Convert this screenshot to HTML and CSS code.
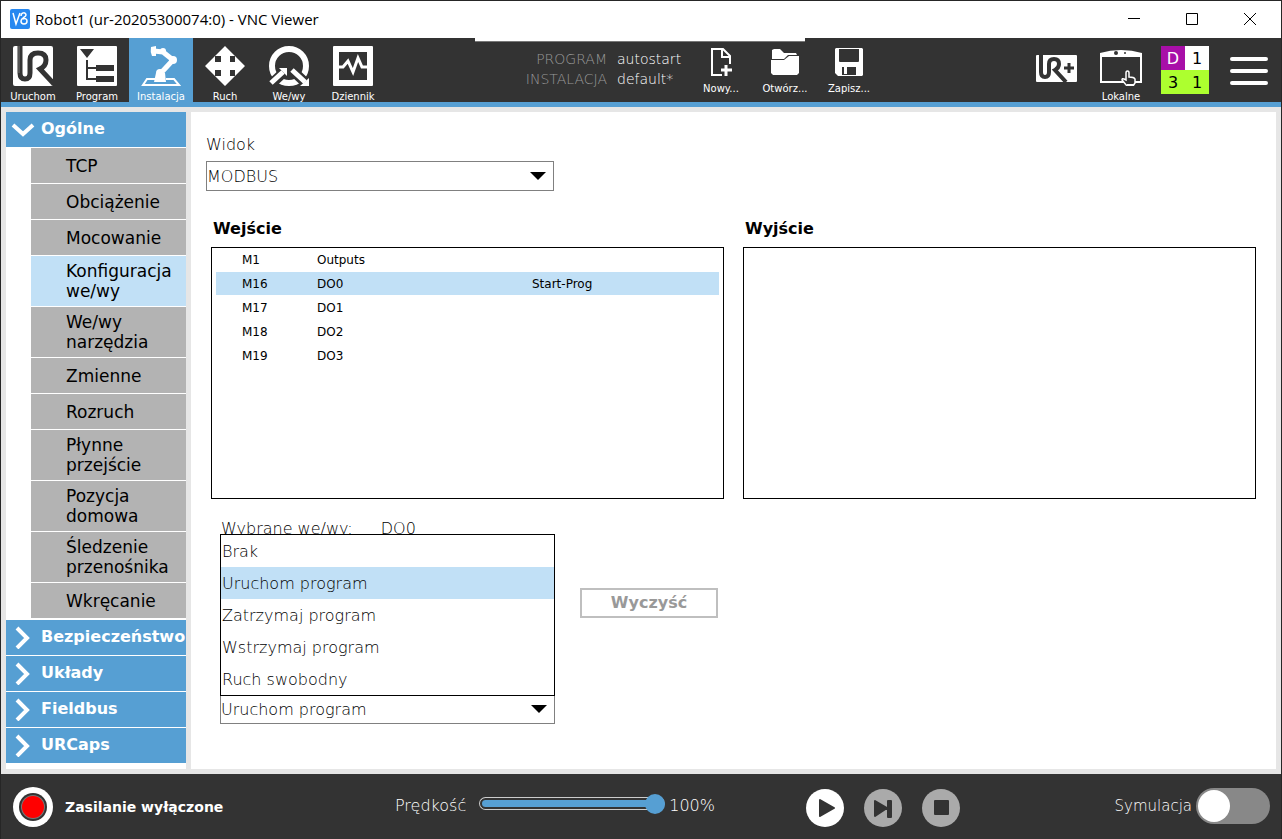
FILE: index.html
```
<!DOCTYPE html>
<html lang="pl">
  <head>
    <meta charset="UTF-8" />
    <meta name="viewport" content="width=device-width, initial-scale=1.0">
    <title>Robot1 (ur-20205300074:0) - VNC Viewer</title>
    <link rel="stylesheet" href="styles.css">
  </head>
  <body>
    <div class="window">
      <!-- Title bar -->
      <header class="titlebar">
        <svg class="app-icon" width="20" height="20" viewBox="0 0 20 20">
          <rect width="20" height="20" rx="2" fill="#2788f0"/>
          <path d="M3 4l3 11 4-11" fill="none" stroke="#fff" stroke-width="1.5"/>
          <path d="M11 7c0-4 5-4 5-1 0 2-5 3-5 6 0 4 6 4 6 0 0-2-2-3-4-2" fill="none" stroke="#fff" stroke-width="1.5"/>
        </svg>
        <span class="window-title">Robot1 (ur-20205300074:0) - VNC Viewer</span>
        <div class="window-buttons">
          <button class="window-button" aria-label="Minimize">
            <svg width="14" height="14" viewBox="0 0 14 14"><path d="M1 6.500h12" stroke="#000"/></svg>
          </button>
          <button class="window-button" aria-label="Maximize">
            <svg width="14" height="14" viewBox="0 0 14 14"><path d="M1.500 1.500h11v11h-11z" fill="none" stroke="#000"/></svg>
          </button>
          <button class="window-button" aria-label="Close">
            <svg width="14" height="14" viewBox="0 0 14 14"><path d="M1 1l12 12M13 1L1 13" stroke="#000"/></svg>
          </button>
        </div>
      </header>
      <div class="vnc-handle"></div>

      <!-- Toolbar -->
      <div class="toolbar">
        <nav class="tabs">
          <button class="tab">
            <svg width="40" height="40" viewBox="0 0 40 40">
              <rect width="40" height="40" rx="2" fill="#fff"/>
              <path d="M7 0V27Q7 33 12 33T17 27V14Q17 7 25 7T33 14Q33 20 27 23L41 38" fill="none" stroke="#333" stroke-width="5"/>
              <path d="M6 0v27" stroke="#777"/>
            </svg>
            Uruchom
          </button>
          <button class="tab">
            <svg width="40" height="40" viewBox="0 0 40 40">
              <rect width="40" height="40" rx="1" fill="#fff"/>
              <path d="M3 3h14l-7 9zM19 19h18v6H19zM19 30h18v6H19z" fill="#333"/>
              <path d="M10 14v19h9M10 22h9" fill="none" stroke="#333" stroke-width="2"/>
            </svg>
            Program
          </button>
          <button class="tab tab-active">
            <svg width="40" height="40" viewBox="0 0 40 40">
              <path d="M14 33H6l-4 6h36l-5-6h-8" fill="none" stroke="#fff" stroke-width="2"/>
              <path d="M13 5l9 1 10 8-13 14" fill="none" stroke="#fff" stroke-width="5" stroke-linejoin="round"/>
              <path d="M10 1l5-1v10h-4q-2-4-1-9z" fill="#fff"/>
              <circle cx="22" cy="5" r="3" fill="#fff"/>
              <circle cx="32" cy="14" r="4" fill="#fff"/>
              <circle cx="19" cy="27" r="4" fill="#fff"/>
              <path d="M15 27h9l1 9H13z" fill="#fff"/>
            </svg>
            Instalacja
          </button>
          <button class="tab">
            <svg width="40" height="40" viewBox="0 0 40 40">
              <path d="M20 0l10 10h-5v6h5v-6l10 10-10 10v-6h-5v6h5L20 40 10 30h6v-6h-6v6L0 20l10-10v6h6v-6h-6z" fill="#fff"/>
              <path d="M17 10h6v20h-6zM10 17h20v6H10z" fill="#fff"/>
            </svg>
            Ruch
          </button>
          <button class="tab">
            <svg width="40" height="40" viewBox="0 0 40 40">
              <circle cx="20" cy="20" r="17" fill="none" stroke="#fff" stroke-width="6"/>
              <path d="M0 40L14 27M40 40L24 25" stroke="#333" stroke-width="10"/>
              <path d="M2 37l12-11M23 24l13 12" stroke="#fff" stroke-width="5"/>
              <path d="M10 22h8v8zM40 32v8h-9z" fill="#fff"/>
            </svg>
            We/wy
          </button>
          <button class="tab">
            <svg width="40" height="40" viewBox="0 0 40 40">
              <rect width="40" height="40" rx="1" fill="#fff"/>
              <path d="M6 6h28v28H6z" fill="#333"/>
              <path d="M6 21h4l5-6 5 11 5-14 4 9h5" fill="none" stroke="#fff" stroke-width="3"/>
            </svg>
            Dziennik
          </button>
        </nav>

        <div class="file-area">
          <dl class="program-info">
            <dt>PROGRAM</dt><dd>autostart</dd>
            <dt>INSTALACJA</dt><dd>default*</dd>
          </dl>
          <button class="file-button">
            <svg width="28" height="28" viewBox="0 0 28 28">
              <path d="M15 27H5V1h11l7 7v8" fill="none" stroke="#fff" stroke-width="2"/>
              <path d="M15 1v8h8" fill="none" stroke="#fff" stroke-width="2"/>
              <path d="M19 17v11M14 22h11" stroke="#fff" stroke-width="3"/>
            </svg>
            Nowy...
          </button>
          <button class="file-button">
            <svg width="28" height="28" viewBox="0 0 28 28">
              <path d="M1 10V2l2-1h6l4 4h12l1 2h-9l-4 4H1z" fill="#fff"/>
              <path d="M0 12h13l5-4h10v17l-2 2H2l-2-2z" fill="#fff"/>
            </svg>
            Otwórz...
          </button>
          <button class="file-button">
            <svg width="28" height="28" viewBox="0 0 28 28">
              <path d="M1 0h26l1 1v26l-1 1H3l-3-3V1z" fill="#fff"/>
              <path d="M4 1h20v12q0 1-1 1H5q-1 0-1-1zM7 19h14v8H7z" fill="#333"/>
              <path d="M9 19h3v7H9z" fill="#fff"/>
            </svg>
            Zapisz...
          </button>
        </div>

        <div class="status-area">
          <button class="urplus" aria-label="UR+">
            <svg width="42" height="28" viewBox="0 0 42 28">
              <rect width="41" height="27" y="1" rx="1" fill="#fff"/>
              <path d="M5 0V18Q5 23 9 23T13 18V10Q13 5 18 5T23 10Q23 14 19 16L30 28" fill="none" stroke="#333" stroke-width="4"/>
              <path d="M33 9v10M28 14h10" stroke="#333" stroke-width="3"/>
            </svg>
          </button>
          <button class="tab">
            <svg width="42" height="40" viewBox="0 0 42 40">
              <path d="M1 10v26h40V10" fill="none" stroke="#fff" stroke-width="2"/>
              <path d="M0 11V7q10-3 21-3t21 3v4z" fill="#fff"/>
              <circle cx="16" cy="7" r="2" fill="#333"/>
              <circle cx="25" cy="7" r="1" fill="#333"/>
              <path d="M26 34v-7q0-2 1.500-2t1.500 2v4q5 0 6 2v4l-2 3h-6l-5-6q0-2 2-1z" fill="#333" stroke="#fff" stroke-width="1.5"/>
              <path d="M27 38h7v2h-7z" fill="#fff"/>
            </svg>
            Lokalne
          </button>
          <div class="checksum">
            <span class="sum-violet">D</span><span class="sum-white">1</span>
            <span>3</span><span>1</span>
          </div>
          <button class="menu-button" aria-label="Menu">
            <svg width="38" height="30" viewBox="0 0 38 30">
              <path d="M2 3h34M2 15h34M2 27h34" stroke="#fff" stroke-width="4" stroke-linecap="round"/>
            </svg>
          </button>
        </div>
      </div>

      <main class="workspace">
        <!-- Side navigation -->
        <nav class="sidebar">
          <button class="group">
            <svg class="chevron" width="24" height="24" viewBox="0 0 24 24"><path d="M2 8l10 9L22 8" fill="none" stroke="#fff" stroke-width="4"/></svg>
            Ogólne
          </button>
          <ul class="items">
            <li><a class="item" href="#">TCP</a></li>
            <li><a class="item" href="#">Obciążenie</a></li>
            <li><a class="item" href="#">Mocowanie</a></li>
            <li><a class="item item-active" href="#">Konfiguracja we/wy</a></li>
            <li><a class="item" href="#">We/wy narzędzia</a></li>
            <li><a class="item" href="#">Zmienne</a></li>
            <li><a class="item" href="#">Rozruch</a></li>
            <li><a class="item" href="#">Płynne przejście</a></li>
            <li><a class="item" href="#">Pozycja domowa</a></li>
            <li><a class="item" href="#">Śledzenie przenośnika</a></li>
            <li><a class="item" href="#">Wkręcanie</a></li>
          </ul>
          <button class="group">
            <svg class="chevron" width="24" height="24" viewBox="0 0 24 24"><path d="M6 3l10 10L6 23" fill="none" stroke="#fff" stroke-width="4"/></svg>
            Bezpieczeństwo
          </button>
          <button class="group">
            <svg class="chevron" width="24" height="24" viewBox="0 0 24 24"><path d="M6 3l10 10L6 23" fill="none" stroke="#fff" stroke-width="4"/></svg>
            Układy
          </button>
          <button class="group">
            <svg class="chevron" width="24" height="24" viewBox="0 0 24 24"><path d="M6 3l10 10L6 23" fill="none" stroke="#fff" stroke-width="4"/></svg>
            Fieldbus
          </button>
          <button class="group">
            <svg class="chevron" width="24" height="24" viewBox="0 0 24 24"><path d="M6 3l10 10L6 23" fill="none" stroke="#fff" stroke-width="4"/></svg>
            URCaps
          </button>
        </nav>

        <!-- I/O setup -->
        <section class="content">
          <div class="view-field">
            <label for="view">Widok</label>
            <div class="select-box">
              <select id="view">
                <option>MODBUS</option>
              </select>
            </div>
          </div>

          <div class="io-panels">
            <div class="io-panel">
              <h2>Wejście</h2>
              <div class="io-list">
                <table class="io-table">
                  <tr><td>M1</td><td>Outputs</td><td></td></tr>
                  <tr class="selected"><td>M16</td><td>DO0</td><td>Start-Prog</td></tr>
                  <tr><td>M17</td><td>DO1</td><td></td></tr>
                  <tr><td>M18</td><td>DO2</td><td></td></tr>
                  <tr><td>M19</td><td>DO3</td><td></td></tr>
                </table>
              </div>
            </div>
            <div class="io-panel">
              <h2>Wyjście</h2>
              <div class="io-list"></div>
            </div>
          </div>

          <div class="action-area">
            <div class="action-field">
              <div class="selected-io"><label for="action">Wybrane we/wy:</label><span>DO0</span></div>
              <div class="select-box">
                <select id="action">
                  <option>Uruchom program</option>
                </select>
                <ul class="popup">
                  <li>Brak</li>
                  <li class="selected">Uruchom program</li>
                  <li>Zatrzymaj program</li>
                  <li>Wstrzymaj program</li>
                  <li>Ruch swobodny</li>
                </ul>
              </div>
            </div>
            <button class="clear-button" disabled>Wyczyść</button>
          </div>
        </section>
      </main>

      <!-- Bottom bar -->
      <footer class="footer">
        <button class="power">
          <svg width="40" height="40" viewBox="0 0 40 40">
            <circle cx="20" cy="20" r="20" fill="#fff"/>
            <circle cx="20" cy="20" r="14" fill="#333"/>
            <circle cx="20" cy="20" r="12" fill="#777"/>
            <circle cx="20" cy="20" r="11" fill="#f00"/>
          </svg>
          Zasilanie wyłączone
        </button>
        <div class="speed">
          <label for="speed">Prędkość</label>
          <input id="speed" type="range" min="0" max="100" value="100">
          <output for="speed">100%</output>
        </div>
        <div class="transport">
          <button class="round-button" aria-label="Play">
            <svg width="38" height="38" viewBox="0 0 38 38"><path d="M14 11l14 8-14 8z" fill="#333" stroke="#333" stroke-width="2" stroke-linejoin="round"/></svg>
          </button>
          <button class="round-button round-disabled" aria-label="Step">
            <svg width="38" height="38" viewBox="0 0 38 38"><path d="M11 12l12 7-12 8zM24 12h3v16h-3z" fill="#333" stroke="#333" stroke-width="2" stroke-linejoin="round"/></svg>
          </button>
          <button class="round-button round-disabled" aria-label="Stop">
            <svg width="38" height="38" viewBox="0 0 38 38"><rect x="12" y="11" width="15" height="15" rx="1" fill="#333"/></svg>
          </button>
        </div>
        <label class="simulation">
          Symulacja
          <input class="toggle" type="checkbox">
        </label>
      </footer>
    </div>
  </body>
</html>
```
FILE: styles.css
```
* {
  box-sizing: border-box;
}

body {
  margin: 0;
  font-family: "DejaVu Sans", sans-serif;
  font-size: 16px;
  color: #000;
}

button {
  margin: 0;
  padding: 0;
  border: 0;
  background: none;
  font: inherit;
  color: inherit;
}

svg {
  display: block;
  flex: none;
}

ul,
dl,
dd,
h2 {
  margin: 0;
  padding: 0;
  list-style: none;
}

.window {
  position: relative;
  display: flex;
  flex-direction: column;
  min-height: 100vh;
  border: 1px solid #262626;
  background: #e6e6e6;
}

/* Title bar */
.titlebar {
  display: flex;
  align-items: center;
  height: 37px;
  padding: 0 24px 2px 9px;
  background: #fff;
}

.window-title {
  margin-left: 5px;
  font-family: "Open Sans", sans-serif;
  font-size: 15px;
  line-height: 20px;
}

.window-buttons {
  display: flex;
  gap: 44px;
  margin-left: auto;
}

.vnc-handle {
  position: absolute;
  top: 37px;
  left: 474px;
  width: 330px;
  height: 4px;
  border-bottom: 1px solid #777;
  background: #fff;
}

/* Toolbar */
.toolbar {
  display: flex;
  justify-content: space-between;
  height: 69px;
  padding-right: 1px;
  border-bottom: 5px solid #569fd3;
  background: #333;
  color: #fff;
}

.tabs,
.file-area,
.status-area {
  display: flex;
}

.tab,
.file-button {
  display: flex;
  flex-direction: column;
  align-items: center;
  width: 64px;
  font-size: 10px;
  line-height: 12px;
}

.tab {
  gap: 5px;
  padding-top: 8px;
}

.tab-active {
  background: #569fd3;
}

.file-button {
  gap: 7px;
  padding-top: 10px;
}

.program-info {
  display: grid;
  grid-template-columns: 78px 72px;
  column-gap: 10px;
  align-content: start;
  padding-top: 11px;
  font-size: 14px;
  line-height: 20px;
  font-weight: 200;
}

.program-info dt {
  justify-self: end;
  color: #999;
}

.urplus {
  width: 64px;
  padding: 0 11px 4px;
}

.checksum {
  display: grid;
  grid-template-columns: 24px 24px;
  grid-template-rows: 24px 24px;
  align-self: flex-start;
  margin: 8px 20px 0 8px;
  background: #adff2f;
  color: #000;
  text-align: center;
  line-height: 26px;
}

.sum-violet {
  background: #a80fa8;
  color: #fff;
}

.sum-white {
  background: #fff;
}

.menu-button {
  padding: 2px 12px 0 1px;
}

/* Workspace */
.workspace {
  display: flex;
  flex: 1;
  gap: 5px;
  padding: 5px;
}

.sidebar {
  display: flex;
  flex-direction: column;
  flex: none;
  gap: 1px;
  width: 180px;
  background: #fff;
}

.group {
  display: flex;
  align-items: center;
  gap: 6px;
  height: 35px;
  padding: 0 0 2px 5px;
  background: #569fd3;
  color: #fff;
  font-weight: bold;
  line-height: 20px;
}

.items {
  display: flex;
  flex-direction: column;
  gap: 1px;
  margin-bottom: 1px;
  padding-left: 25px;
}

.item {
  display: flex;
  align-items: center;
  min-height: 35px;
  padding: 5px 5px 5px 35px;
  background: #b3b3b3;
  color: #000;
  font-size: 17px;
  line-height: 20px;
  text-decoration: none;
}

.item-active,
.selected {
  background: #c1e0f6;
}

.content {
  flex: 1;
  padding: 23px 20px 45px;
  background: #fff;
  font-weight: 200;
}

.view-field {
  width: 348px;
  margin-left: -5px;
}

.view-field label {
  display: block;
  margin-bottom: 6px;
  line-height: 20px;
}

.select-box {
  position: relative;
}

.select-box select {
  display: block;
  width: 100%;
  height: 30px;
  padding: 0;
  border: 1px solid #808080;
  border-radius: 0;
  background: #fff;
  color: #000;
  font: inherit;
  appearance: none;
}

.select-box::after {
  content: "";
  position: absolute;
  top: 11px;
  right: 8px;
  border: 8px solid transparent;
  border-top-color: #000;
  border-bottom: 0;
}

.io-panels {
  display: flex;
  gap: 19px;
  margin-top: 28px;
}

.io-panel {
  flex: 1;
}

.io-panel h2 {
  margin-bottom: 8px;
  padding-left: 2px;
  font-size: 16px;
  line-height: 20px;
}

.io-list {
  height: 252px;
  padding: 0 4px;
  border: 1px solid #000;
}

.io-table {
  width: 100%;
  border-spacing: 0;
  font-size: 12px;
  font-weight: normal;
}

.io-table td {
  height: 24px;
  padding: 0;
  border-bottom: 1px solid #fff;
}

.io-table td:first-child {
  width: 101px;
  padding-left: 26px;
}

.io-table td:nth-child(2) {
  width: 215px;
}

.action-area {
  display: flex;
  align-items: center;
  gap: 25px;
  margin-top: 20px;
  padding-left: 9px;
}

.action-field {
  width: 335px;
}

.selected-io {
  display: flex;
  gap: 28px;
  margin-bottom: 155px;
  padding-left: 1px;
  line-height: 20px;
}

.popup {
  position: absolute;
  bottom: 28px;
  left: 0;
  width: 100%;
  border: 1px solid #000;
  background: #fff;
}

.popup li {
  padding: 2px 0 0 1px;
  line-height: 30px;
}

.clear-button {
  width: 138px;
  height: 30px;
  margin-bottom: 38px;
  border: 2px solid #bfbfbf;
  color: #999;
  font-weight: bold;
}

/* Bottom bar */
.footer {
  display: grid;
  grid-template-columns: 382px 411px 1fr auto;
  align-items: center;
  height: 65px;
  padding: 0 11px 0 12px;
  background: #333;
  color: #fff;
  font-weight: 200;
}

.power {
  display: flex;
  align-items: center;
  gap: 12px;
  font-size: 14px;
  font-weight: bold;
}

.speed {
  display: flex;
  align-items: center;
  gap: 4px;
  padding-bottom: 3px;
}

.speed input {
  width: 186px;
  height: 20px;
  margin: 0 0 3px 9px;
  background: none;
  appearance: none;
}

.speed input::-webkit-slider-runnable-track {
  height: 13px;
  padding: 2px 0 2px 2px;
  border: 1px solid #ccc;
  border-right: 0;
  border-radius: 7px;
  background: #569fd3 content-box;
}

.speed input::-webkit-slider-thumb {
  width: 20px;
  height: 20px;
  margin-top: -6px;
  border-radius: 50%;
  background: #569fd3;
  appearance: none;
}

.transport {
  display: flex;
  gap: 20px;
  padding-top: 2px;
}

.round-button {
  border-radius: 50%;
  background: #fff;
}

.round-disabled {
  background: #aaa;
}

.simulation {
  display: flex;
  align-items: center;
  gap: 4px;
  padding-bottom: 2px;
  font-size: 15px;
}

.toggle {
  display: flex;
  align-items: center;
  width: 74px;
  height: 36px;
  margin: 0;
  padding: 2px;
  border-radius: 18px;
  background: #888;
  appearance: none;
}

.toggle::before {
  content: "";
  width: 32px;
  height: 32px;
  border-radius: 50%;
  background: #fff;
}

.toggle:checked {
  justify-content: flex-end;
  background: #569fd3;
}
```
